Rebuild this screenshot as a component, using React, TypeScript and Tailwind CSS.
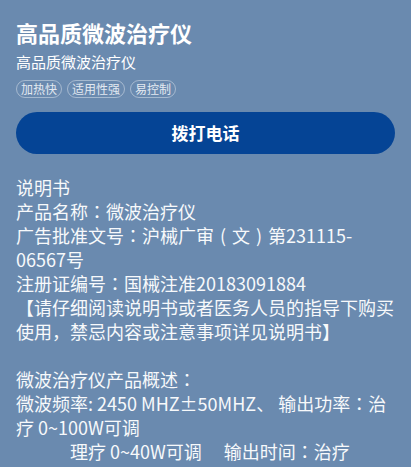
import React from "react";

function P({ children }: { children: React.ReactNode }) {
  return <span style={{ fontFamily: '"Noto Sans CJK TC", sans-serif' }}>{children}</span>;
}

function B({ children }: { children: React.ReactNode }) {
  return <span className="inline-block w-[18px] text-center">{children}</span>;
}

export default function App() {
  const font = { fontFamily: '"Noto Sans CJK SC", "Noto Sans", sans-serif' };
  return (
    <div className="w-[411px] h-[467px] overflow-hidden bg-[#6a8aaf] px-4 pt-4 text-white" style={font}>
      <div className="text-[22px] leading-[32px] font-bold">高品质微波治疗仪</div>
      <div className="mt-[4px] text-[15px] leading-[20px]">高品质微波治疗仪</div>
      <div className="mt-[8px] flex gap-[5px]">
        {["加热快", "适用性强", "易控制"].map((t) => (
          <span key={t} className="h-[18px] rounded-full border border-white/40 px-[4px] text-[12px] leading-[16px] text-[#e3e9f1]">
            {t}
          </span>
        ))}
      </div>
      <button className="mt-[14px] flex h-[42px] w-full items-center justify-center rounded-full bg-[#054495] text-[17px] font-bold text-white">
        拨打电话
      </button>
      <div className="mt-[21px] text-[18px] leading-[24px] text-[#f7f9fb] whitespace-pre-wrap break-words">
        说明书{"\n"}
        产品名称<P>：</P>微波治疗仪{"\n"}
        广告批准文号<P>：</P>沪械广审<B>(</B>文<B>)</B>第231115-06567号{"\n"}
        注册证编号<P>：</P>国械注准20183091884{"\n"}
        【请仔细阅读说明书或者医务人员的指导下购买使用，禁忌内容或注意事项详见说明书】{"\n"}
        {"\n"}
        微波治疗仪产品概述<P>：</P>{"\n"}
        微波频率: 2450 MHZ±50MHZ、 输出功率<P>：</P>治疗 0~100W可调{"\n"}
        {"\u3000\u3000\u3000"}理疗 0~40W可调{"\u3000 "}输出时间<P>：</P>治疗
      </div>
    </div>
  );
}
